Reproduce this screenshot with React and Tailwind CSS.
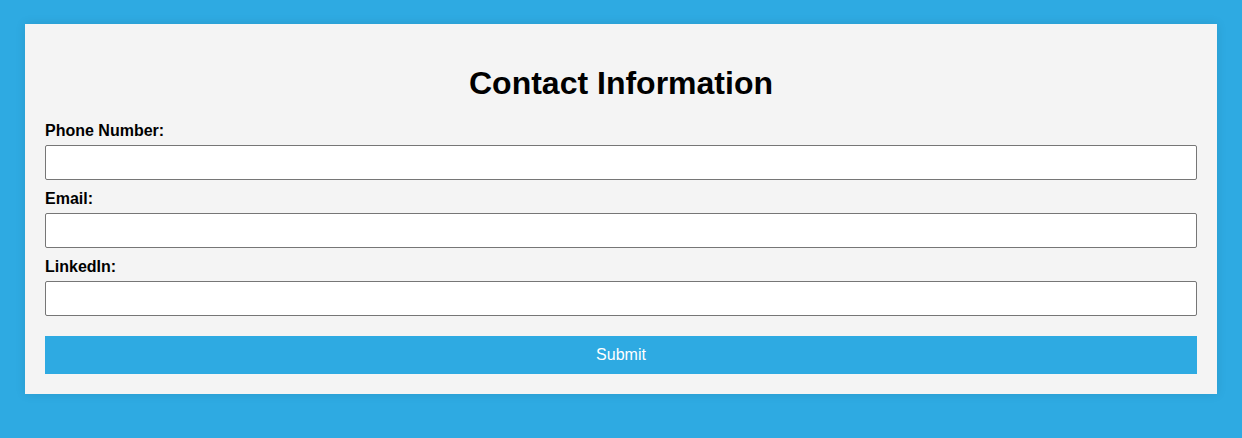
const fields = [
  { id: 'phone', label: 'Phone Number:', type: 'tel' },
  { id: 'email', label: 'Email:', type: 'email' },
  { id: 'linkedin', label: 'LinkedIn:', type: 'text' },
];

const App = () => {
  return (
    <div
      className="min-h-[438px] bg-[#2eaae2] px-[25px] pt-[24px] pb-[44px]"
      style={{ fontFamily: '"Liberation Sans", Arial, sans-serif' }}
    >
      <div className="bg-[#f4f4f4] p-[20px] shadow-[0_0_10px_rgba(0,0,0,0.1)]">
        <h1 className="mt-[21px] mb-[20px] text-center text-[32px] leading-[37px] font-bold text-black">
          Contact Information
        </h1>
        <form className="flex flex-col gap-[10px]" onSubmit={(e) => e.preventDefault()}>
          {fields.map((field) => (
            <div key={field.id} className="flex flex-col">
              <label htmlFor={field.id} className="mb-[5px] text-[16px] leading-[18px] font-bold text-black">
                {field.label}
              </label>
              <input
                id={field.id}
                type={field.type}
                className="h-[35px] w-full rounded-[2px] border border-[#767676] bg-white px-2 text-[16px]"
              />
            </div>
          ))}
          <button
            type="submit"
            className="mt-[10px] h-[38px] w-full bg-[#2eaae2] text-[16px] text-white"
          >
            Submit
          </button>
        </form>
      </div>
    </div>
  );
};

export default App;
